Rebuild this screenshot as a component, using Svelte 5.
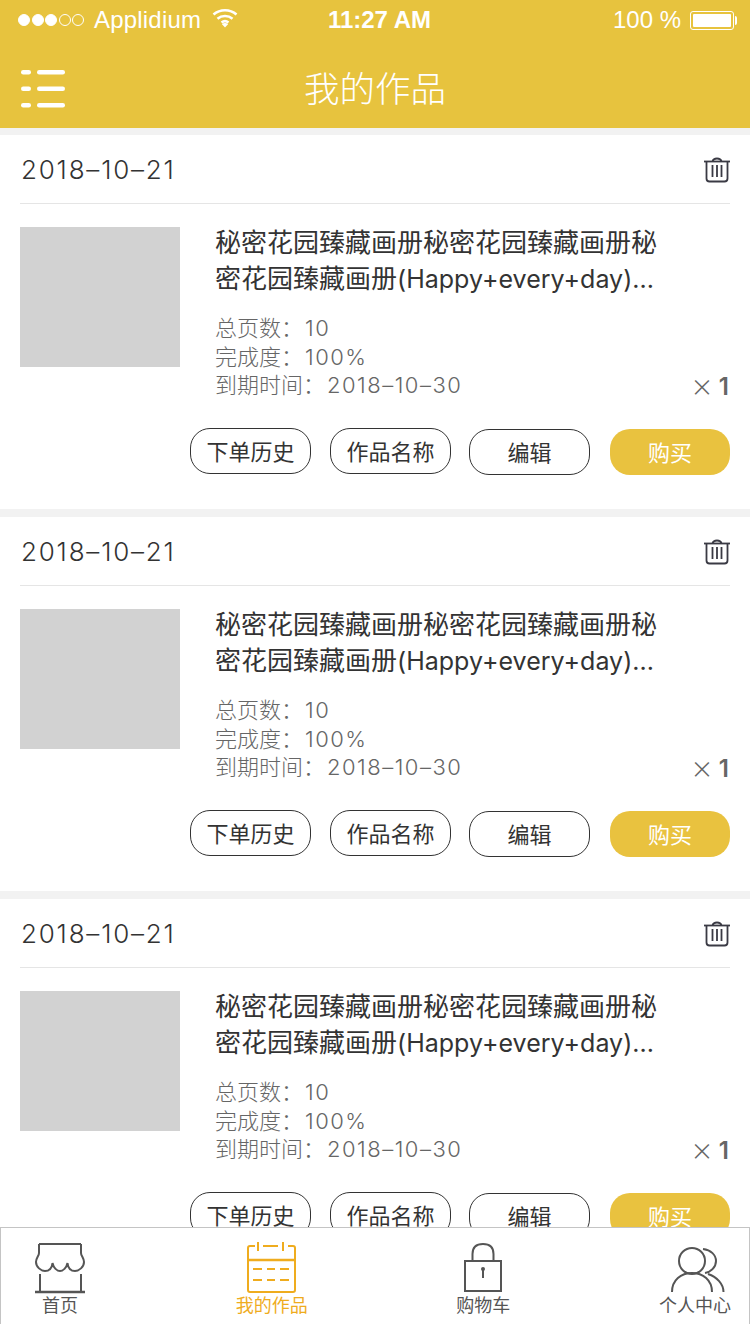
<script>
  const works = [1, 2, 3];
  const actions = [
    { label: '下单历史' },
    { label: '作品名称' },
    { label: '编辑', low: true, shifted: true },
    { label: '购买', low: true, primary: true }
  ];
</script>

<div class="page">
  <header class="topbar">
    <div class="status">
      <div class="status-left">
        <span class="dots">
          <i class="on"></i><i class="on"></i><i class="on"></i><i></i><i></i>
        </span>
        <span class="carrier">Applidium</span>
        <svg class="wifi" width="26" height="20" viewBox="0 0 26 20" fill="none" stroke="#fff" stroke-width="2.6">
          <path d="M1.5 6.5C8 .8 18 .8 24.5 6.5" />
          <path d="M5.5 10.8c4.300-3.700 10.700-3.700 15 0" />
          <path d="M9.500 14.500c2.100-1.600 4.900-1.600 7 0" />
          <path d="M13 19.500l-3.200-3.600c1.900-1.300 4.500-1.300 6.400 0z" fill="#fff" stroke="none" />
        </svg>
      </div>
      <div class="clock">11:27 AM</div>
      <div class="status-right">
        <span>100 %</span>
        <span class="battery"><b></b></span>
      </div>
    </div>
    <div class="navbar">
      <svg class="menu" width="46" height="40" viewBox="0 0 46 40" fill="#fff">
        <rect x="1" y="1" width="10" height="4.500" rx="2.200" />
        <rect x="17" y="1" width="28" height="4.500" rx="2.200" />
        <rect x="1" y="17.500" width="10" height="4.500" rx="2.200" />
        <rect x="17" y="17.500" width="28" height="4.500" rx="2.200" />
        <rect x="1" y="34" width="10" height="4.500" rx="2.200" />
        <rect x="17" y="34" width="28" height="4.500" rx="2.200" />
      </svg>
      <h1>我的作品</h1>
    </div>
  </header>

  <main>
    {#each works as work (work)}
      <section class="card">
        <div class="card-head">
          <span class="date">2018–10–21</span>
          <svg class="trash" width="28" height="28" viewBox="0 0 28 28" fill="none" stroke="#3a3a44" stroke-width="1.800">
            <path d="M1 6.500h26" />
            <path d="M9.500 6.500C10.500 2.500 17.500 2.500 18.500 6.500" />
            <path d="M3.500 7v16.500c0 2 1 3 3 3h15c2 0 3-1 3-3V7" />
            <path d="M9.500 10v12M14 10v12M18.500 10v12" />
          </svg>
        </div>
        <div class="card-body">
          <div class="thumb"></div>
          <div class="info">
            <div class="title">秘密花园臻藏画册秘密花园臻藏画册秘密花园臻藏画册<span class="latin">(Happy+every+day)...</span></div>
            <ul class="meta">
              <li>总页数：<span class="num">10</span></li>
              <li>完成度：<span class="num">100%</span></li>
              <li>到期时间：<span class="num">2018–10–30</span></li>
            </ul>
            <div class="qty"><span class="times">×</span><span>1</span></div>
          </div>
        </div>
        <div class="actions">
          {#each actions as action}
            <button class:low={action.low} class:shifted={action.shifted} class:primary={action.primary}>{action.label}</button>
          {/each}
        </div>
      </section>
    {/each}
  </main>

  <nav class="tabbar">
    <div class="tab">
      <svg width="52" height="52" viewBox="0 0 52 52" fill="none" stroke="#555" stroke-width="2">
        <path d="M5 2H47M5 2V11C5 14 2 16 2 20C2 25 7 29 11 29C15 29 18 26 18.500 21C19.500 26 23 29 26 29C29 29 32.500 26 33.500 21C34 26 37 29 41 29C45 29 50 25 50 20C50 16 47 14 47 11V2" />
        <path d="M6 32v18M47 32v18" />
        <path d="M1 50h50" stroke-width="2.500" />
      </svg>
      <span>首页</span>
    </div>
    <div class="tab active">
      <svg width="50" height="52" viewBox="0 0 50 52" fill="none" stroke="#efac1e" stroke-width="2">
        <path d="M8 4H3C1.500 4 1 5 1 6V48C1 49.500 1.500 50 3 50H46C47.500 50 48 49.500 48 48V6C48 5 47.500 4 46 4H41" />
        <path d="M16 4h15M11 0v9M36 0v9" />
        <path d="M1 18h47" stroke-width="2.500" />
        <path d="M6 27h9M20 27h8M33 27h9M6 38h9M20 38h8M33 38h9" />
      </svg>
      <span>我的作品</span>
    </div>
    <div class="tab">
      <svg width="40" height="52" viewBox="0 0 40 52" fill="none" stroke="#555" stroke-width="2">
        <path d="M2 19h36v30H2z" />
        <path d="M9.500 19V12C9.500 5 14 2 20 2s10.500 3 10.500 10v7" />
        <circle cx="20" cy="27" r="2" fill="#555" stroke="none" />
        <path d="M20 27v9" />
      </svg>
      <span>购物车</span>
    </div>
    <div class="tab">
      <svg class="users" width="56" height="52" viewBox="0 0 56 52" fill="none" stroke="#555" stroke-width="2">
        <circle cx="25" cy="19" r="13" />
        <path d="M5 50C5 38 14 31 25 31S45 38 45 50" />
        <path d="M36 7C44 8 49 13 49 19C49 25 44 30 38 31" />
        <path d="M41 32C50 35 56.500 42 56.500 50" />
      </svg>
      <span>个人中心</span>
    </div>
  </nav>
</div>

<style>
  :global(body) {
    margin: 0;
    background: #f2f2f2;
  }

  .page {
    position: relative;
    width: 750px;
    height: 1324px;
    overflow: hidden;
    font-family: "Liberation Sans", "Noto Sans CJK SC", sans-serif;
    color: #333;
  }

  .topbar {
    height: 128px;
    background: #e7c33e;
    color: #fff;
  }

  .status {
    height: 40px;
    padding: 0 16px 0 18px;
    display: grid;
    grid-template-columns: 1fr auto 1fr;
    align-items: center;
    font-size: 24px;
    font-weight: 300;
  }

  .status-left {
    display: flex;
    align-items: center;
  }

  .dots {
    display: flex;
    gap: 1.500px;
    margin-right: 10px;
  }

  .dots i {
    box-sizing: border-box;
    width: 12px;
    height: 12px;
    border: 1px solid #fff;
    border-radius: 50%;
  }

  .dots i.on {
    background: #fff;
  }

  .carrier {
    margin-right: 11px;
    letter-spacing: 0.2px;
  }

  .wifi {
    margin-top: -4px;
  }

  .clock {
    font-weight: 700;
    margin-left: 7px;
  }

  .status-right {
    display: flex;
    justify-content: flex-end;
    align-items: center;
    gap: 9px;
  }

  .battery {
    position: relative;
    box-sizing: border-box;
    width: 44px;
    height: 19px;
    border: 1px solid #fff;
    border-radius: 3px;
    padding: 2px;
  }

  .battery b {
    display: block;
    height: 100%;
    background: #fff;
    border-radius: 1px;
  }

  .battery::after {
    content: "";
    position: absolute;
    right: -4px;
    top: 4px;
    width: 2px;
    height: 9px;
    background: #fff;
    border-radius: 0 2px 2px 0;
  }

  .navbar {
    position: relative;
    height: 88px;
    display: flex;
    align-items: center;
    justify-content: center;
  }

  .menu {
    position: absolute;
    left: 20px;
    top: 29px;
  }

  .navbar h1 {
    margin: 13px 0 0;
    font-size: 35.500px;
    font-weight: 300;
    line-height: 1;
  }

  main {
    padding-top: 7px;
  }

  .card {
    box-sizing: border-box;
    height: 374px;
    margin-bottom: 8px;
    padding: 0 20px;
    background: #fff;
  }

  .card-head {
    box-sizing: border-box;
    height: 69px;
    padding: 0 0 0 1px;
    display: flex;
    justify-content: space-between;
    align-items: center;
    border-bottom: 1px solid #e5e5e5;
  }

  .date {
    font-family: Inter, "Noto Sans CJK SC", sans-serif;
    font-weight: 300;
    font-size: 26px;
    letter-spacing: 1.800px;
    color: #333;
  }

  .trash {
    margin-right: -1px;
  }

  .card-body {
    display: flex;
    gap: 35px;
    padding-top: 23px;
  }

  .thumb {
    flex: none;
    width: 160px;
    height: 140px;
    background: #d2d2d2;
  }

  .info {
    position: relative;
    flex: 1;
    min-width: 0;
    padding-right: 72px;
    font-family: Inter, "Noto Sans CJK SC", sans-serif;
  }

  .title {
    font-size: 26px;
    line-height: 36px;
    color: #333;
    margin-top: -2px;
  }

  .latin {
    font-size: 25px;
  }

  .meta {
    list-style: none;
    margin: 17px 0 0;
    padding: 0;
    font-size: 22px;
    font-weight: 300;
    line-height: 28.500px;
    color: #666;
  }

  .num {
    margin-left: 2px;
    letter-spacing: 1.500px;
  }

  .qty {
    position: absolute;
    right: 1px;
    top: 146px;
    display: flex;
    align-items: center;
    gap: 6px;
    font-size: 24px;
    line-height: 28px;
    font-weight: 600;
    color: #666;
  }

  .times {
    font-weight: 200;
    font-size: 34px;
    margin-top: -4px;
  }

  .actions {
    display: flex;
    justify-content: flex-end;
    gap: 19px;
    margin-top: 28.500px;
  }

  .actions button {
    box-sizing: border-box;
    width: 121px;
    height: 46px;
    padding: 0 0 2px;
    border: 1px solid #333;
    border-radius: 20px;
    background: #fff;
    font: inherit;
    font-size: 22px;
    color: #333;
  }

  .actions button.low {
    margin-top: 1px;
  }

  .actions button.shifted {
    margin-left: -1px;
    margin-right: 1px;
  }

  .actions button.primary {
    width: 120px;
    border: none;
    background: #e9c23f;
    color: #fff;
  }

  .tabbar {
    position: absolute;
    left: 0;
    right: 0;
    bottom: 0;
    box-sizing: border-box;
    height: 97px;
    padding: 14px 18px 0 23px;
    display: flex;
    justify-content: space-between;
    background: #fff;
    border: 1px solid #c4c4c4;
    border-bottom: none;
  }

  .tab {
    display: flex;
    flex-direction: column;
    align-items: center;
    width: 72px;
    font-size: 18px;
    line-height: 24px;
    color: #555;
    white-space: nowrap;
  }

  .tab svg {
    display: block;
    flex: none;
  }

  .tab svg.users {
    overflow: visible;
  }

  .tab.active {
    color: #efac1e;
  }
</style>
